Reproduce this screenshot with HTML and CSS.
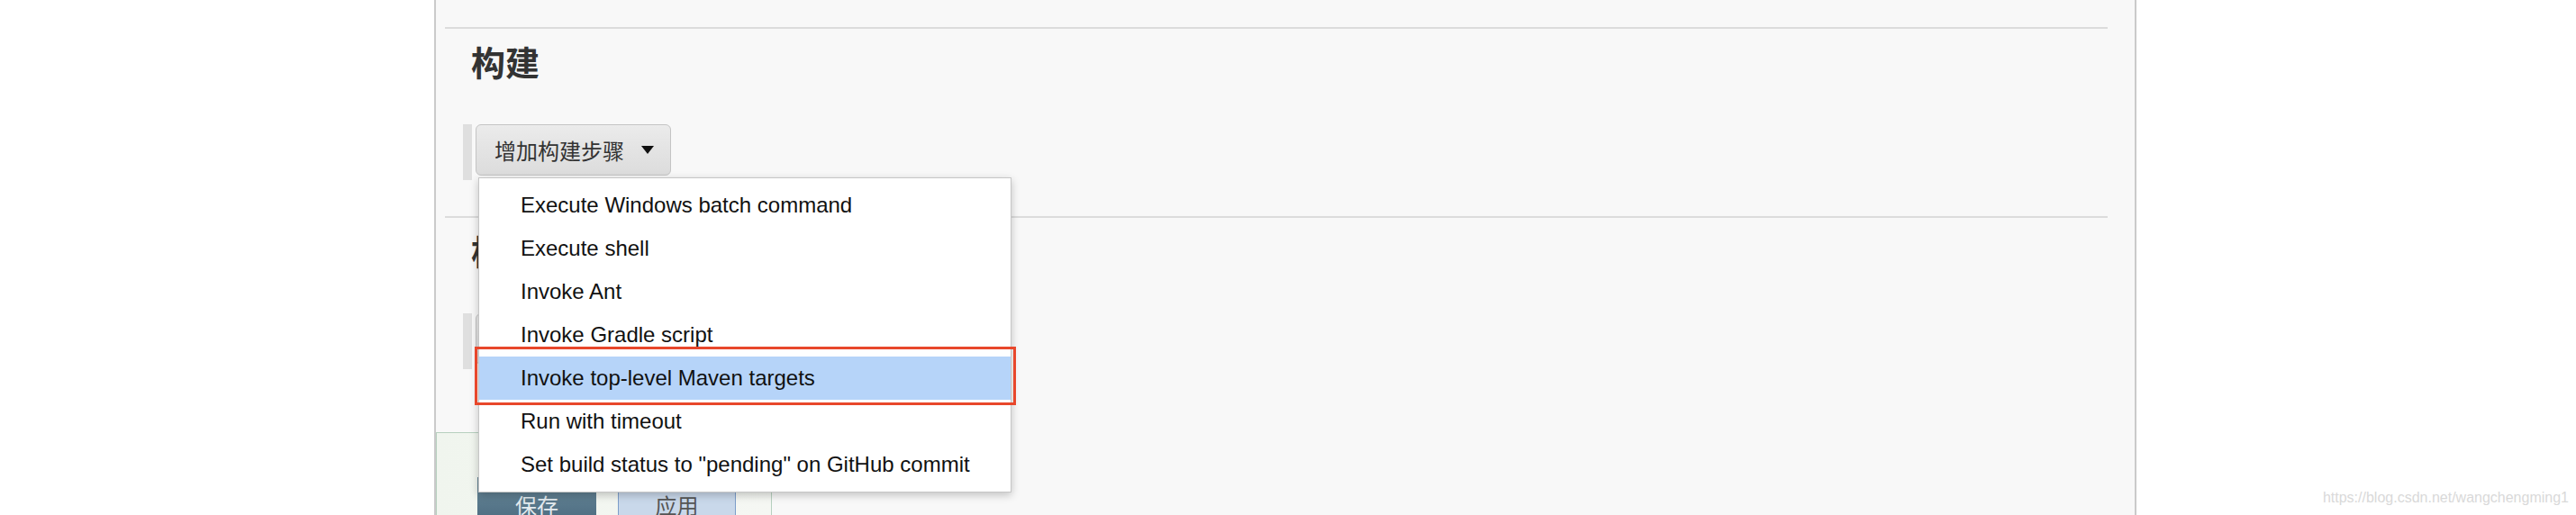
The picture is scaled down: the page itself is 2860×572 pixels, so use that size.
FILE: index.html
```html
<!DOCTYPE html>
<html lang="zh-CN">
<head>
<meta charset="utf-8">
<title>构建</title>
<link rel="stylesheet" href="styles.css">
</head>
<body>
<div class="page">
  <div class="panel">
    <div class="content">
      <div class="sep"></div>
      <section class="section">
        <h2 class="section-title">构建</h2>
        <div class="step-row">
          <span class="stripe"></span>
          <button class="add-btn">增加构建步骤<span class="caret"></span></button>
          <ul class="menu">
            <li class="menu-item">Execute Windows batch command</li>
            <li class="menu-item">Execute shell</li>
            <li class="menu-item">Invoke Ant</li>
            <li class="menu-item">Invoke Gradle script</li>
            <li class="menu-item is-active">Invoke top-level Maven targets<span class="annot"></span></li>
            <li class="menu-item">Run with timeout</li>
            <li class="menu-item">Set build status to "pending" on GitHub commit</li>
          </ul>
        </div>
      </section>
      <div class="sep"></div>
      <section class="section">
        <h2 class="section-title">构建后操作</h2>
        <div class="step-row">
          <span class="stripe"></span>
          <button class="add-btn">增加构建后操作步骤<span class="caret"></span></button>
        </div>
      </section>
    </div>
    <div class="bottom-bar">
      <button class="btn btn-save">保存</button>
      <button class="btn btn-apply">应用</button>
    </div>
  </div>
</div>
<div class="watermark">https://blog.csdn.net/wangchengming1</div>
</body>
</html>
```
FILE: styles.css
```css
* { box-sizing: border-box; }
html, body { margin: 0; padding: 0; }
body {
  width: 2860px;
  height: 572px;
  overflow: hidden;
  position: relative;
  background: #ffffff;
  font-family: "Liberation Sans", Arial, "Noto Sans CJK SC", sans-serif;
}
.page {
  display: flex;
  height: 572px;
  padding-left: 482px;
}
.panel {
  width: 1890px;
  height: 572px;
  background: #f8f8f8;
  border-left: 2px solid #cacaca;
  border-right: 2px solid #cacaca;
  display: flex;
  flex-direction: column;
}
.content {
  padding: 30px 30px 0 10px;
}
.sep {
  height: 2px;
  background: #dcdcdc;
}
.section-title {
  margin: 17px 0 0 29px;
  font-family: "Noto Sans CJK SC", sans-serif;
  font-weight: 700;
  font-size: 38px;
  line-height: 38px;
  color: #333333;
}
.step-row {
  position: relative;
  display: flex;
  align-items: flex-start;
  height: 62px;
  margin: 51px 0 40px 20px;
}
.stripe {
  width: 10px;
  height: 62px;
  background: #dfdfdf;
}
.add-btn {
  margin-left: 4px;
  height: 57px;
  padding: 0 18px 0 20px;
  display: flex;
  align-items: center;
  border: 1px solid #c4c4c4;
  border-radius: 6px;
  background: linear-gradient(#ebebeb, #dcdcdc);
  font-family: "Noto Sans CJK SC", sans-serif;
  font-size: 24px;
  color: #333333;
}
.caret {
  margin-left: 19px;
  width: 0;
  height: 0;
  border-left: 7px solid transparent;
  border-right: 7px solid transparent;
  border-top: 9px solid #111111;
}
.menu {
  position: absolute;
  top: 59px;
  left: 17px;
  width: 592px;
  margin: 0;
  padding: 6px 0;
  list-style: none;
  background: #ffffff;
  border: 1px solid #c6c6c6;
  box-shadow: 0 3px 9px rgba(0, 0, 0, 0.22);
  z-index: 10;
}
.menu-item {
  position: relative;
  height: 48px;
  line-height: 48px;
  padding-left: 46px;
  font-family: "Liberation Sans", Arial, sans-serif;
  font-size: 24px;
  color: #111111;
  white-space: nowrap;
}
.menu-item.is-active {
  background: #b6d4f9;
}
.annot {
  position: absolute;
  top: -11px;
  bottom: -6px;
  left: -5px;
  right: -6px;
  border: 3px solid #e8472b;
}
.bottom-bar {
  margin-top: 30px;
  width: 373px;
  flex: 1;
  display: flex;
  gap: 24px;
  padding: 49px 0 0 45px;
  border: 1px solid #b7d0bf;
  border-bottom: 0;
  background: linear-gradient(to right, #f0f5ee, #f5f7f3);
}
.btn {
  height: 62px;
  border: 0;
  padding: 0;
  font-family: "Noto Sans CJK SC", sans-serif;
  font-size: 24px;
  line-height: 62px;
  text-align: center;
}
.btn-save {
  width: 132px;
  background: linear-gradient(#6b8a9a, #44647a);
  color: #e4ebef;
}
.btn-apply {
  width: 131px;
  background: #c9d8ea;
  border-left: 1px solid #7c9dca;
  border-right: 1px solid #7c9dca;
  color: #555555;
}
.watermark {
  position: absolute;
  right: 8px;
  bottom: 11px;
  font-family: "Liberation Sans", Arial, sans-serif;
  font-size: 16px;
  line-height: 16px;
  color: #d9d9d9;
}
```
